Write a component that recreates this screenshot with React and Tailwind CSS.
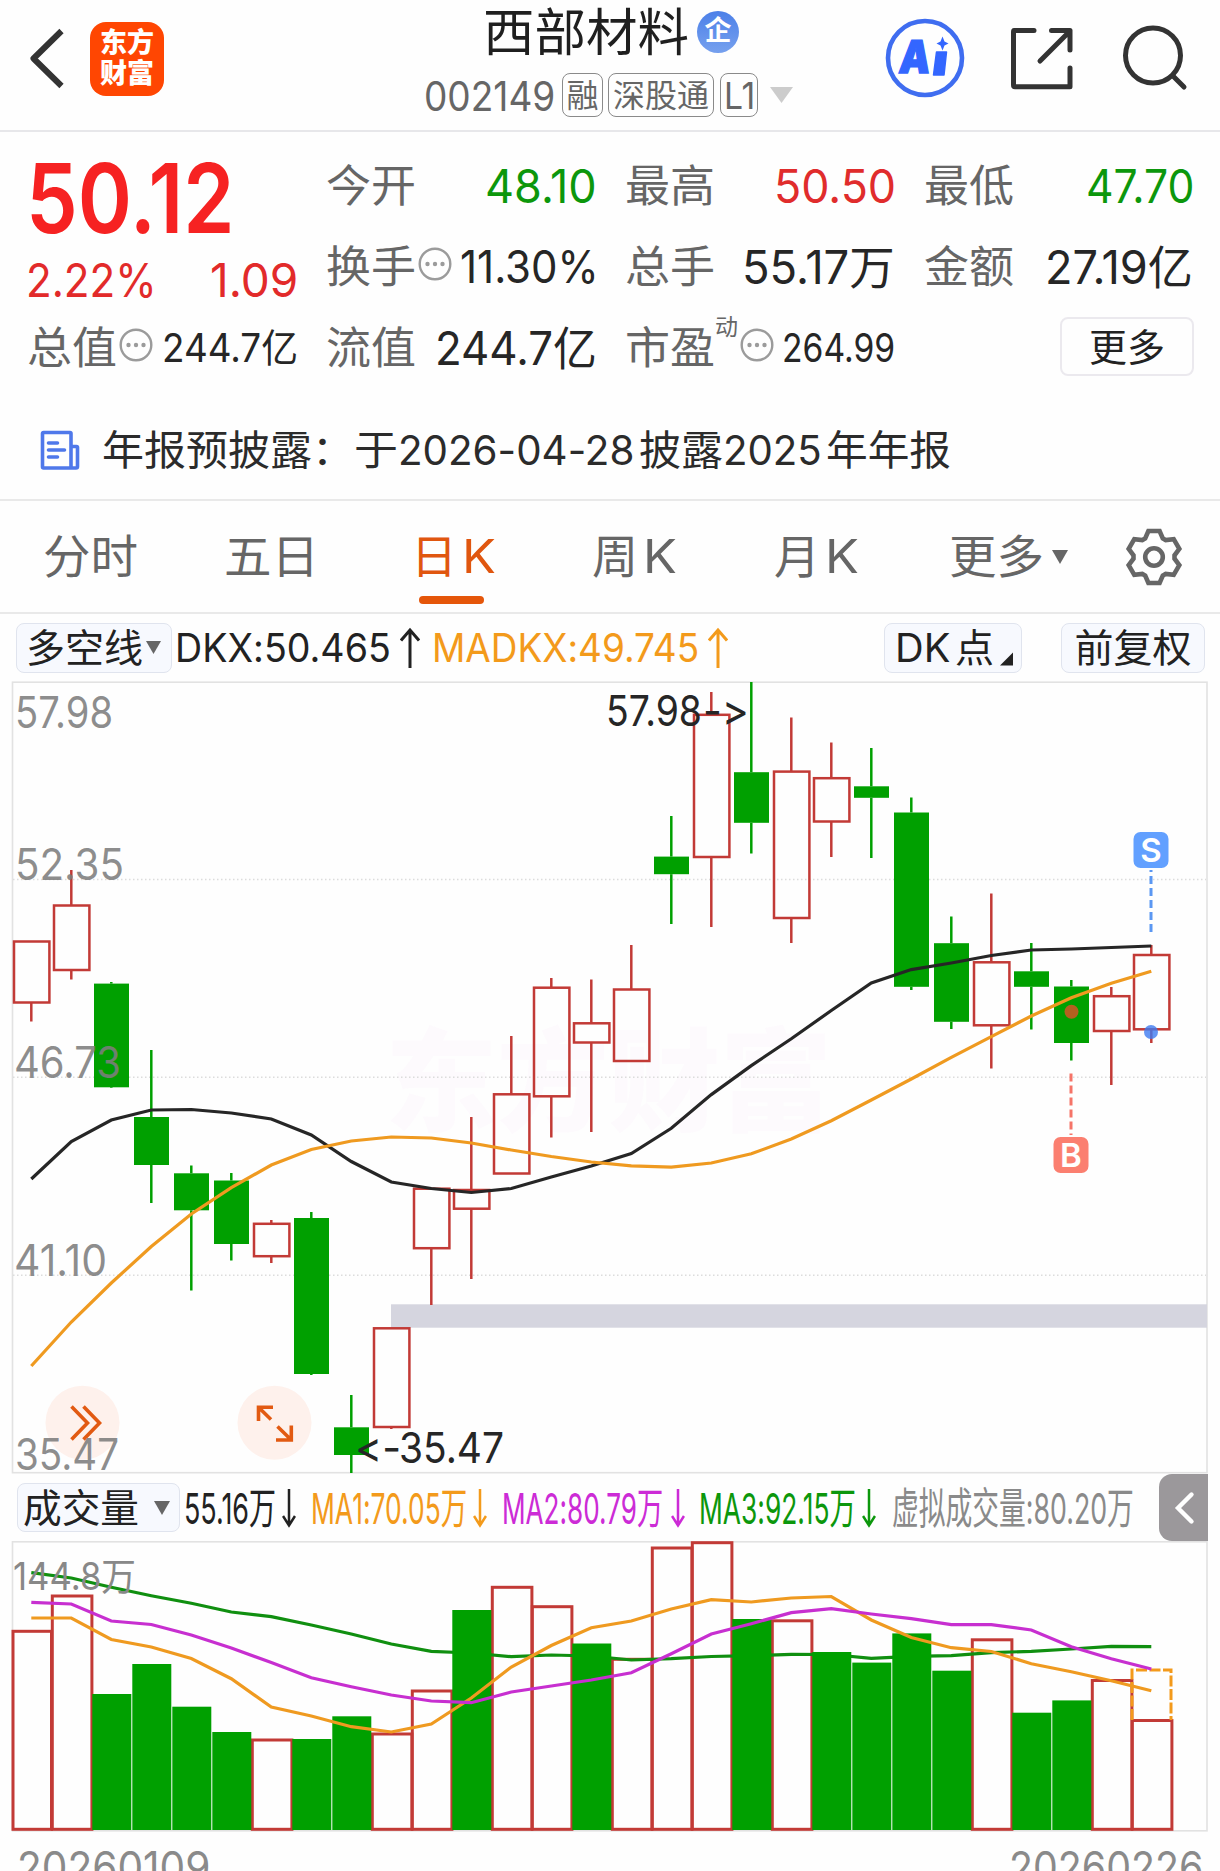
import { useLayoutEffect, useRef, useState } from "react";

const GREEN = "#00a000";
const RED = "#c23a36";

// stretches one line of text to the width of its box
const Fit = ({ className = "", children }) => {
  const box = useRef(null);
  const text = useRef(null);
  const [scale, setScale] = useState(1);

  useLayoutEffect(() => {
    setScale(box.current.clientWidth / text.current.offsetWidth);
  }, [children]);

  return (
    <span ref={box} className={`block shrink-0 ${className}`}>
      <span
        ref={text}
        className="inline-block origin-left whitespace-nowrap"
        style={{ transform: `scaleX(${scale})` }}
      >
        {children}
      </span>
    </span>
  );
};

const Caret = ({ className = "" }) => (
  <svg viewBox="0 0 16 13" preserveAspectRatio="none" className={`shrink-0 ${className}`}>
    <path d="M0 0H16L8 13Z" fill="currentColor" />
  </svg>
);

const ArrowUp = ({ className = "" }) => (
  <svg viewBox="0 0 20 42" className={`w-[20px] h-[42px] shrink-0 ${className}`} fill="none" stroke="currentColor" strokeWidth="3">
    <path d="M10 41V3M1 13.500L10 3L19 13.500" />
  </svg>
);

const ArrowDown = ({ className = "" }) => (
  <svg viewBox="0 0 14 42" className={`w-[14px] h-[42px] shrink-0 ${className}`} fill="none" stroke="currentColor" strokeWidth="2.500">
    <path d="M7 2V38M1 29L7 38.500L13 29" />
  </svg>
);

const Dots = ({ className = "" }) => (
  <svg viewBox="0 0 34 34" className={`w-[34px] h-[34px] shrink-0 ${className}`}>
    <circle cx="17" cy="17" r="15.3" fill="none" stroke="#9b9b9b" strokeWidth="2.4" />
    <circle cx="9.500" cy="17" r="2.2" fill="#9b9b9b" />
    <circle cx="17" cy="17" r="2.2" fill="#9b9b9b" />
    <circle cx="24.500" cy="17" r="2.2" fill="#9b9b9b" />
  </svg>
);

const Gear = () => {
  const points = [];
  for (let k = 0; k < 6; k++) {
    const a = (k * Math.PI) / 3;
    [[-8.8, -18.6], [-5.6, -26], [5.6, -26], [8.8, -18.6]].forEach(([x, y]) => {
      points.push(`${x * Math.cos(a) - y * Math.sin(a)},${x * Math.sin(a) + y * Math.cos(a)}`);
    });
  }
  return (
    <svg viewBox="-29 -29 58 58" className="w-[58px] h-[58px]" fill="none" stroke="#666" strokeWidth="4.6">
      <polygon points={points.join(" ")} />
      <circle r="8.800" />
    </svg>
  );
};

const Header = () => (
  <header className="flex h-[132px] border-b-2 border-[#e7e7ea]">
    <div className="w-[420px] flex pt-[22px] pl-[28px]">
      <svg viewBox="0 0 38 74" className="w-[38px] h-[74px]" fill="none" stroke="#333" strokeWidth="6">
        <path d="M33.500 9L5.500 36.500L33.500 64" strokeLinejoin="round" />
      </svg>
      <div className="ml-[24px] w-[74px] h-[74px] rounded-[16px] bg-[#ff4602] text-white font-black text-[27px] leading-[31px] pt-[5px] flex flex-col items-center">
        <span>东方</span>
        <span>财富</span>
      </div>
    </div>

    <div className="w-[460px] flex flex-col">
      <div className="flex items-center h-[64px] pl-[63px]">
        <Fit className="w-[206px] mt-[2px] text-[51px] leading-[64px] text-[#1f1f1f]">西部材料</Fit>
        <div className="ml-[8px] w-[42px] h-[42px] rounded-full bg-linear-to-b from-[#4c80e8] to-[#76a0ee] text-white font-bold text-[27px] leading-[40px] text-center">
          企
        </div>
      </div>
      <div className="flex items-center h-[62px] text-[#666]">
        <Fit className="ml-[4px] mt-[2px] w-[131px] text-[41px] leading-[60px]">002149</Fit>
        <span className="ml-[7px] w-[41px] h-[44px] rounded-[8px] border border-[#8a8a8a] text-[32px] leading-[43px] flex justify-center">融</span>
        <span className="ml-[5px] w-[106px] h-[44px] rounded-[8px] border border-[#8a8a8a] text-[32px] leading-[43px] flex justify-center">深股通</span>
        <span className="ml-[6px] w-[38px] h-[44px] rounded-[8px] border border-[#8a8a8a] text-[37px] leading-[43px] flex justify-center">
          <Fit className="w-[31px]">L1</Fit>
        </span>
        <Caret className="ml-[12px] w-[23px] h-[16px] text-[#ccc]" />
      </div>
    </div>

    <div className="flex pt-[17px]">
      <svg viewBox="0 0 82 82" className="ml-[4px] w-[82px] h-[82px]">
        <circle cx="41" cy="41" r="37" fill="none" stroke="#3f6df0" strokeWidth="4.600" />
        <text x="16" y="56" fontSize="45" fontWeight="900" fill="#3366ff" stroke="#3366ff" strokeWidth="1.500" textLength="31" lengthAdjust="spacingAndGlyphs" transform="skewX(-6) translate(4 0)">A</text>
        <path d="M52.500 35H62.500L60 58H49.500Z" fill="#3366ff" stroke="#3366ff" strokeWidth="1.500" strokeLinejoin="round" />
        <path d="M58.500 19.500L60.500 24.500L64.500 26.500L60.500 28.500L58.500 33.500L56.500 28.500L52.500 26.500L56.500 24.500Z" fill="#3366ff" />
      </svg>
      <svg viewBox="0 0 68 82" className="ml-[42px] w-[68px] h-[82px]" fill="none" stroke="#333" strokeWidth="5" strokeLinecap="round" strokeLinejoin="round">
        <path d="M26 13.500H6Q5.500 13.500 5.500 15V68Q5.500 69.800 7 69.800H62V51" />
        <path d="M43.500 13.500H62V33M62 14L32 44" />
      </svg>
      <svg viewBox="0 0 68 82" className="ml-[46px] w-[68px] h-[82px]" fill="none" stroke="#333" strokeWidth="5" strokeLinecap="round">
        <circle cx="31" cy="38.500" r="27.500" />
        <path d="M51 59L62 70" />
      </svg>
    </div>
  </header>
);

const Stat = ({ label, mark, dots, children }) => (
  <div className="flex items-center h-[81px] w-[270px]">
    <Fit className="-ml-px w-[90px] text-[44px] text-[#666]">{label}</Fit>
    {mark && <span className="w-[22px] mb-[42px] text-[23px] leading-[24px] text-[#666]">{mark}</span>}
    {dots && <Dots className={mark ? "ml-[3px] -mt-[5px]" : "ml-[2px] -mt-[5px]"} />}
    <div className="ml-auto flex">{children}</div>
  </div>
);

const Quote = () => (
  <section className="flex gap-[29px] pl-[28px] pt-[13px] h-[256px] leading-[60px] text-[#262626]">
    <div className="w-[270px]">
      <div className="h-[107px] flex items-center">
        <Fit className="-ml-[2px] w-[209px] text-[96px] leading-[107px] font-semibold text-[#f62222]">50.12</Fit>
      </div>
      <div className="h-[55px] flex items-center justify-between text-[47px] text-[#e22a2a]">
        <Fit className="-ml-[2px] w-[131px]">2.22%</Fit>
        <Fit className="w-[88px]">1.09</Fit>
      </div>
      <Stat label="总值" dots>
        <Fit className="w-[136px] text-[39px]">244.7亿</Fit>
      </Stat>
    </div>
    <div>
      <Stat label="今开"><Fit className="w-[112px] text-[47px] text-[#0c970c]">48.10</Fit></Stat>
      <Stat label="换手" dots><Fit className="-mr-[2px] w-[139px] text-[45px]">11.30%</Fit></Stat>
      <Stat label="流值"><Fit className="w-[162px] text-[46px]">244.7亿</Fit></Stat>
    </div>
    <div>
      <Stat label="最高"><Fit className="w-[122px] text-[47px] text-[#e02c2c]">50.50</Fit></Stat>
      <Stat label="总手"><Fit className="mr-px w-[153px] text-[46px]">55.17万</Fit></Stat>
      <Stat label="市盈" mark="动" dots><Fit className="mr-px w-[113px] text-[39px]">264.99</Fit></Stat>
    </div>
    <div>
      <Stat label="最低"><Fit className="mr-px w-[108px] text-[47px] text-[#0c970c]">47.70</Fit></Stat>
      <Stat label="金额"><Fit className="mr-[2px] w-[148px] text-[46px]">27.19亿</Fit></Stat>
      <div className="h-[79px] flex items-center justify-end">
        <button className="mr-px w-[134px] h-[59px] rounded-[8px] border-2 border-[#ebe9ee] text-[38px] leading-[54px] text-[#222]">更多</button>
      </div>
    </div>
  </section>
);

const Notice = () => (
  <section className="h-[113px] pt-[12px] pl-[40px] flex items-center border-b-2 border-[#e9e9e9] text-[#2b2b2b]">
    <svg viewBox="0 0 40 40" className="w-[40px] h-[40px]" fill="none" stroke="#4f78ea" strokeWidth="3.600" strokeLinejoin="round">
      <path d="M31 38H3.500Q2.500 38 2.500 37V3.500Q2.500 2.500 3.500 2.500H30Q31 2.500 31 3.500V38Q31 38 32 38H36Q37.500 38 37.500 36.500V17.500Q37.500 16.500 36.500 16.500H31" />
      <path d="M8.500 13H17.500M8.500 20H24.500M8.500 27H17.500" strokeLinecap="round" />
    </svg>
    <div className="ml-[22px] mt-px flex text-[41px] leading-[60px]">
      <Fit className="w-[252px]">年报预披露：</Fit>
      <Fit className="w-[44px]">于</Fit>
      <Fit className="w-[236px]">2026-04-28</Fit>
      <Fit className="ml-[5px] w-[84px]">披露</Fit>
      <Fit className="w-[99px]">2025</Fit>
      <Fit className="ml-[4px] w-[125px]">年年报</Fit>
    </div>
  </section>
);

const Tabs = () => (
  <nav className="h-[113px] flex border-b-2 border-[#e9e9e9] text-[46px] leading-[111px] text-[#666]">
    <div className="w-[181px] pl-[43px]"><Fit className="w-[95px]">分时</Fit></div>
    <div className="w-[181px] pl-[43px]"><Fit className="w-[95px]">五日</Fit></div>
    <div className="w-[181px] pl-[49px] text-[#e0560f]">
      <div className="flex">
        <span className="w-[50px]">日</span>
        <Fit className="ml-[1px] w-[34px]">K</Fit>
      </div>
      <div className="-mt-[16px] ml-[8px] w-[65px] h-[8px] rounded-full bg-[#e5560a]" />
    </div>
    <div className="w-[181px] pl-[49px] flex">
      <span className="w-[50px]">周</span>
      <Fit className="ml-[1px] w-[34px]">K</Fit>
    </div>
    <div className="w-[181px] pl-[50px] flex">
      <span className="w-[50px]">月</span>
      <Fit className="ml-[1px] w-[34px]">K</Fit>
    </div>
    <div className="w-[220px] pl-[44px] flex items-center">
      <Fit className="w-[95px]">更多</Fit>
      <Caret className="ml-[8px] w-[16px] h-[14px]" />
    </div>
    <div className="pt-[27px]"><Gear /></div>
  </nav>
);

const Toolbar = () => (
  <div className="h-[67px] flex items-center text-[39px] leading-[46px] text-[#222]">
    <div className="ml-[16px] w-[156px] h-[50px] rounded-[8px] border border-[#e0e4ee] bg-[#f7f9fe] pl-[9px] flex items-center">
      <Fit className="w-[117px]">多空线</Fit>
      <Caret className="ml-[3px] w-[15px] h-[13px] text-[#666]" />
    </div>
    <Fit className="ml-[3px] w-[216px]">DKX:50.465</Fit>
    <ArrowUp className="ml-[9px]" />
    <div className="ml-[12px] flex items-center text-[#f39a1b]">
      <Fit className="w-[267px]">MADKX:49.745</Fit>
      <ArrowUp className="ml-[9px]" />
    </div>
    <div className="ml-auto w-[138px] h-[50px] rounded-[8px] border border-[#e0e4ee] bg-[#f7f9fe] pl-[10px] flex items-center">
      <Fit className="w-[55px]">DK</Fit>
      <span className="ml-[5px]">点</span>
      <svg viewBox="0 0 14 14" className="ml-[6px] mt-[22px] w-[13px] h-[14px]">
        <path d="M14 0V14H0Z" fill="#222" />
      </svg>
    </div>
    <div className="ml-[39px] mr-[15px] w-[144px] h-[50px] rounded-[8px] border border-[#e0e4ee] bg-[#f7f9fe] flex items-center justify-center">
      <Fit className="w-[117px]">前复权</Fit>
    </div>
  </div>
);

// [up, body top, body bottom, high, low]
const candles = [
  [1, 941.5, 1002.5, 941, 1021.5],
  [1, 905.5, 970, 870, 979.5],
  [0, 983.6, 1087.3, 982, 1088],
  [0, 1117, 1165, 1050, 1203],
  [0, 1173.3, 1210.3, 1165.5, 1290.5],
  [0, 1180.5, 1244, 1173, 1260.5],
  [1, 1223.8, 1256.2, 1220, 1263],
  [0, 1218, 1374, 1212, 1375],
  [0, 1427.3, 1455, 1395, 1473],
  [1, 1328.3, 1427, 1328, 1429],
  [1, 1188.7, 1248.2, 1188, 1305],
  [1, 1190, 1208.7, 1117, 1279],
  [1, 1094.3, 1173.5, 1036, 1174],
  [1, 987.7, 1096.3, 978, 1137.5],
  [1, 1023.3, 1042.5, 979.5, 1132],
  [1, 989.5, 1061, 945, 1061],
  [0, 856.6, 874.2, 816, 924],
  [1, 714.8, 857, 692, 927],
  [0, 772.2, 822.8, 682, 853.5],
  [1, 771.6, 918, 717.5, 943],
  [1, 778.2, 821.5, 742.5, 857],
  [0, 786.3, 797.8, 748, 858],
  [0, 812.5, 986.8, 797.5, 990],
  [0, 943.2, 1021.8, 916.5, 1029],
  [1, 962.3, 1025.3, 893.5, 1068.5],
  [0, 971.3, 986.8, 943, 1029.5],
  [0, 986.5, 1043, 980, 1060.5],
  [1, 996.2, 1031, 987, 1085],
  [1, 955, 1029.3, 945, 1043],
];

const dkx = [1179, 1141.5, 1120, 1110, 1109.5, 1113, 1119, 1135, 1161.5, 1182, 1188.5, 1192.5, 1188.5, 1177, 1166, 1153.5, 1128.3, 1094.6, 1065.6, 1038.8, 1010.5, 983, 969.6, 963, 955.5, 950, 949, 947.5, 946];
const madkx = [1366, 1322, 1283, 1246.5, 1214, 1187.7, 1165, 1149.5, 1141, 1137, 1138, 1143, 1150, 1156.5, 1162, 1165.8, 1167.2, 1163, 1153.8, 1139, 1120.7, 1100, 1079, 1057.4, 1036.7, 1016, 997.8, 983.3, 971.3];

const cx = (i) => 31.3 + i * 40;
const line = (values) => values.map((y, i) => `${cx(i)},${y}`).join(" ");

const scaleLabels = [
  ["57.98", 15, 728, 98],
  ["52.35", 15, 880, 109],
  ["46.73", 14, 1078, 107],
  ["41.10", 14, 1276, 93],
  ["35.47", 15, 1470, 104],
];

const Badge = ({ x, y, color, children }) => (
  <g>
    <rect x={x - 17.5} y={y - 18} width="35" height="36" rx="7" fill={color} />
    <text x={x} y={y + 12} fontSize="33" fontWeight="600" fill="#fff" textAnchor="middle">{children}</text>
  </g>
);

const CandleChart = () => (
  <svg viewBox="0 681 1220 793" className="block w-[1220px] h-[793px]">
    <text x="385" y="1123" fontSize="112" fontWeight="900" fill="#fdfafd" textLength="447">东方财富</text>
    {[879.6, 1077.3, 1275.3].map((y) => (
      <line key={y} x1="13" x2="1206" y1={y} y2={y} stroke="#dcdcdc" strokeWidth="1.5" strokeDasharray="1.5 2.5" />
    ))}
    <rect x="12.5" y="682.2" width="1194.5" height="790.5" fill="none" stroke="#e2e2e2" strokeWidth="1.6" />
    <rect x="391" y="1304.3" width="816" height="23.400" fill="#d5d5df" />

    {candles.map(([up, top, bottom, high, low], i) => (
      <g key={i} stroke={up ? RED : GREEN} strokeWidth="2.500">
        {high < top && <line x1={cx(i)} x2={cx(i)} y1={high} y2={top} />}
        {low > bottom && <line x1={cx(i)} x2={cx(i)} y1={bottom} y2={low} />}
        {up ? (
          <rect x={cx(i) - 17.3} y={top} width="35.400" height={bottom - top} fill="none" />
        ) : (
          <rect x={cx(i) - 17.3} y={top} width="35" height={bottom - top} fill={GREEN} stroke="none" />
        )}
      </g>
    ))}

    <circle cx="1071.5" cy="1011.7" r="7" fill="#b5601f" />
    <polyline points={line(dkx)} fill="none" stroke="#262626" strokeWidth="3.2" />
    <polyline points={line(madkx)} fill="none" stroke="#ef9a20" strokeWidth="3.2" />
    <circle cx="1151" cy="1032" r="7" fill="#3d7bf0" fillOpacity="0.8" />

    <line x1="1151" x2="1151" y1="870" y2="932" stroke="#5b97f2" strokeWidth="3" strokeDasharray="8 4" strokeDashoffset="6" />
    <line x1="1071" x2="1071" y1="1073.5" y2="1135" stroke="#f57468" strokeWidth="3" strokeDasharray="8 4" />
    <Badge x={1151} y={850} color="#62a0ff">S</Badge>
    <Badge x={1071} y={1155} color="#fb7f70">B</Badge>

    <g fontSize="43" fill="#262626">
      <text x="606" y="726" textLength="96" lengthAdjust="spacingAndGlyphs">57.98</text>
      <text x="703" y="726" textLength="46" lengthAdjust="spacingAndGlyphs">-&gt;</text>
      <text x="355" y="1463" textLength="46" lengthAdjust="spacingAndGlyphs">&lt;-</text>
      <text x="399" y="1463" textLength="105" lengthAdjust="spacingAndGlyphs">35.47</text>
    </g>

    <circle cx="82.500" cy="1422.700" r="37" fill="#fef1ec" />
    <circle cx="274.500" cy="1422.700" r="37" fill="#fef1ec" />
    <g fill="none" stroke="#e25a12" strokeWidth="3.600">
      <path d="M71.500 1406.500L87.500 1423L71.500 1439.500M83.500 1406.500L99.500 1423L83.500 1439.500" />
      <path d="M258.500 1421V1407.300H273M258.500 1407.300L271 1419.500M276 1440H291.300V1425.500M291.300 1440L277.500 1426.500" />
    </g>

    <g fontSize="44" fill="#7d7d7d" fillOpacity="0.88">
      {scaleLabels.map(([text, x, y, w]) => (
        <text key={text} x={x} y={y} textLength={w} lengthAdjust="spacingAndGlyphs">{text}</text>
      ))}
    </g>
  </svg>
);

const VolumeBar = () => (
  <div className="h-[67px] flex items-center text-[43px] leading-[60px] text-[#222]">
    <div className="ml-[17px] w-[163px] h-[49px] rounded-[8px] border border-[#e0e4ee] bg-[#f7f9fe] pl-[5px] flex items-center leading-[46px] text-[39px]">
      <Fit className="w-[116px]">成交量</Fit>
      <Caret className="ml-[15px] w-[16px] h-[14px] text-[#666]" />
    </div>
    <Fit className="ml-[4px] w-[92px]">55.16万</Fit>
    <ArrowDown className="ml-[6px]" />
    <div className="ml-[15px] flex items-center text-[#f39a1b]">
      <Fit className="w-[156px]">MA1:70.05万</Fit>
      <ArrowDown className="ml-[6px]" />
    </div>
    <div className="ml-[15px] flex items-center text-[#cc2bd6]">
      <Fit className="w-[161px]">MA2:80.79万</Fit>
      <ArrowDown className="ml-[8px]" />
    </div>
    <div className="ml-[14px] flex items-center text-[#0c970c]">
      <Fit className="w-[157px]">MA3:92.15万</Fit>
      <ArrowDown className="ml-[6px]" />
    </div>
    <Fit className="ml-[16px] w-[242px] text-[#8a8a8a]">虚拟成交量:80.20万</Fit>
    <div className="ml-auto mr-[12px] w-[49px] h-[67px] rounded-l-[13px] bg-[#9b989b]">
      <svg viewBox="0 0 49 67" className="w-[49px] h-[67px]" fill="none" stroke="#fff" strokeWidth="4.400" strokeLinecap="round">
        <path d="M32.500 20.500L19 34L32.500 47.500" />
      </svg>
    </div>
  </div>
);

// [up, bar top]
const volumes = [
  [1, 1631.3], [1, 1596], [0, 1694], [0, 1664], [0, 1706.7], [0, 1732], [1, 1740], [0, 1739], [0, 1716.3], [1, 1734],
  [1, 1691], [0, 1610], [1, 1587.3], [1, 1606.7], [0, 1643.5], [1, 1659.3], [1, 1548], [1, 1542.7], [0, 1619], [1, 1620.8],
  [0, 1652], [0, 1662.6], [0, 1633.4], [0, 1670.7], [1, 1639.8], [0, 1712.7], [0, 1700.4], [1, 1680.5], [1, 1720.5],
];
const ma1 = [1618, 1618, 1639.5, 1647, 1658.5, 1678.7, 1707, 1716, 1726.7, 1732, 1724, 1698, 1667, 1645.5, 1627.7, 1621, 1609, 1599.7, 1602, 1598, 1596.5, 1620, 1637.5, 1647.7, 1651.5, 1663.7, 1671.7, 1680.7, 1690.7];
const ma2 = [1602.3, 1604, 1621, 1624.5, 1635, 1648, 1662.5, 1677.7, 1686.7, 1695, 1701, 1702.7, 1692, 1686, 1680, 1672.7, 1653.7, 1634, 1623.7, 1612.7, 1608.7, 1614, 1618.7, 1624.7, 1624.7, 1630, 1646.7, 1658.7, 1669];
const ma3 = [1572.7, 1578, 1587.3, 1595.7, 1603.3, 1612, 1616.7, 1625, 1634, 1644, 1651.3, 1653, 1656.7, 1655, 1656, 1660, 1658.7, 1656.5, 1655.7, 1654.3, 1654.5, 1658.3, 1656.3, 1655.7, 1652.7, 1651.3, 1649, 1646.3, 1646.7];

const VolumeChart = () => (
  <svg viewBox="0 1541 1220 292" className="block w-[1220px] h-[292px]">
    <rect x="12.500" y="1541.800" width="1194.500" height="289" fill="none" stroke="#e2e2e2" strokeWidth="1.600" />
    {volumes.map(([up, top], i) =>
      up ? (
        <rect key={i} x={i ? cx(i) - 19 : 13} y={top} width={i ? 39.6 : 38.5} height={1829.3 - top} fill="none" stroke={RED} strokeWidth="3" />
      ) : null
    )}
    <polyline points={line(ma3)} fill="none" stroke="#108f10" strokeWidth="3.2" />
    {volumes.map(([up, top], i) =>
      up ? null : <rect key={i} x={cx(i) - 19} y={top} width="39" height={1830 - top} fill={GREEN} />
    )}
    <path d="M1132 1720V1670H1171V1720" fill="none" stroke="#f39a1b" strokeWidth="3" strokeDasharray="11 2.500" />
    <polyline points={line(ma1)} fill="none" stroke="#ef9a20" strokeWidth="3.2" />
    <polyline points={line(ma2)} fill="none" stroke="#c72fd0" strokeWidth="3.2" />
    <text x="13" y="1590" fontSize="38" fill="#888" textLength="123" lengthAdjust="spacingAndGlyphs">144.8万</text>
  </svg>
);

export default function App() {
  return (
    <div className="w-[1220px] h-[1871px] overflow-hidden bg-[#fefefe] font-['Inter','Noto_Sans_CJK_SC',sans-serif] [font-variant-ligatures:none]">
      <Header />
      <Quote />
      <Notice />
      <Tabs />
      <Toolbar />
      <CandleChart />
      <VolumeBar />
      <VolumeChart />
      <div className="flex justify-between pl-[17px] pr-[17px] pt-[4px] text-[44px] leading-[60px] text-[#8a8a8a]">
        <Fit className="w-[193px]">20260109</Fit>
        <Fit className="w-[194px]">20260226</Fit>
      </div>
    </div>
  );
}
